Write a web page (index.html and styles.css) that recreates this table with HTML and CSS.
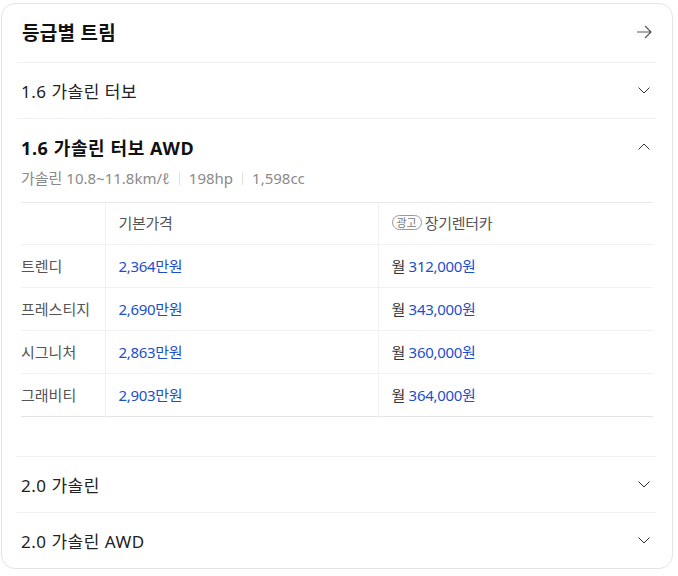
FILE: index.html
```html
<!DOCTYPE html>
<html lang="ko">
<head>
<meta charset="utf-8">
<link rel="stylesheet" href="styles.css">
</head>
<body>
<section class="card">
  <div class="card-head">
    <h2 class="card-title">등급별 트림</h2>
    <svg class="icon-arrow" width="16" height="14" viewBox="0 0 16 14"><path d="M1 7H15M9 1L15 7L9 13" fill="none" stroke="#555" stroke-width="1.2"/></svg>
  </div>

  <div class="trim">
    <div class="trim-row">
      <span class="trim-name">1.6 가솔린 터보</span>
      <svg class="chev" width="12" height="7" viewBox="0 0 12 7"><path d="M0.5 0.5L6 6L11.5 0.5" fill="none" stroke="#333" stroke-width="1"/></svg>
    </div>
  </div>

  <div class="trim open">
    <div class="trim-row open-row">
      <span class="trim-name bold">1.6 가솔린 터보 AWD</span>
      <svg class="chev up" width="12" height="7" viewBox="0 0 12 7"><path d="M0.5 6.5L6 1L11.5 6.5" fill="none" stroke="#333" stroke-width="1"/></svg>
    </div>
    <div class="spec">가솔린 10.8~11.8km/ℓ<span class="sep"></span>198hp<span class="sep"></span>1,598cc</div>
    <table class="price-table">
      <thead>
        <tr><th class="c1"></th><th class="c2">기본가격</th><th class="c3"><span class="ad">광고</span>장기렌터카</th></tr>
      </thead>
      <tbody>
        <tr><td class="c1">트렌디</td><td class="c2 blue">2,364만원</td><td class="c3">월 <span class="blue">312,000원</span></td></tr>
        <tr><td class="c1">프레스티지</td><td class="c2 blue">2,690만원</td><td class="c3">월 <span class="blue">343,000원</span></td></tr>
        <tr><td class="c1">시그니처</td><td class="c2 blue">2,863만원</td><td class="c3">월 <span class="blue">360,000원</span></td></tr>
        <tr><td class="c1">그래비티</td><td class="c2 blue">2,903만원</td><td class="c3">월 <span class="blue">364,000원</span></td></tr>
      </tbody>
    </table>
  </div>

  <div class="trim">
    <div class="trim-row">
      <span class="trim-name">2.0 가솔린</span>
      <svg class="chev" width="12" height="7" viewBox="0 0 12 7"><path d="M0.5 0.5L6 6L11.5 0.5" fill="none" stroke="#333" stroke-width="1"/></svg>
    </div>
  </div>

  <div class="trim last">
    <div class="trim-row">
      <span class="trim-name">2.0 가솔린 AWD</span>
      <svg class="chev" width="12" height="7" viewBox="0 0 12 7"><path d="M0.5 0.5L6 6L11.5 0.5" fill="none" stroke="#333" stroke-width="1"/></svg>
    </div>
  </div>
</section>
</body>
</html>
```
FILE: styles.css
```css
* { box-sizing: border-box; }
html, body { background: #fff; }
body {
  margin: 3px 5px 0 1px;
  font-family: "Noto Sans", "Noto Sans CJK KR", sans-serif;
  color: #222;
}
.card {
  border: 1px solid #e4e4e4;
  border-radius: 14px;
  padding: 0 16px 0 15px;
  height: 566px;
  overflow: hidden;
}
.card-head {
  height: 59px;
  display: flex;
  align-items: center;
  justify-content: space-between;
  padding: 0 4px 3px 5px;
  border-bottom: 1px solid #f0f0f0;
}
.card-title {
  margin: 0;
  font-size: 19px;
  font-weight: 700;
  color: #111;
  letter-spacing: 0.3px;
}
.icon-arrow { display: block; }
.trim { border-bottom: 1px solid #f0f0f0; }
.trim.last { border-bottom: none; }
.trim-row {
  height: 55px;
  display: flex;
  align-items: center;
  justify-content: space-between;
  padding: 0 6px 0 4px;
}
.trim-name {
  font-size: 17px;
  color: #222;
  letter-spacing: 0.5px;
}
.trim-name.bold {
  font-weight: 700;
  font-size: 18px;
  color: #111;
  letter-spacing: 0.6px;
}
.chev { display: block; }
.chev.up { margin-bottom: 4px; }
.open-row {
  height: auto;
  padding-top: 17px;
  line-height: 24px;
}
.trim.open { padding-bottom: 39px; }
.spec {
  padding: 0 4px;
  margin: 8px 0 14px;
  font-size: 15px;
  line-height: 20px;
  color: #8a8a8a;
  display: flex;
  align-items: center;
}
.sep {
  display: inline-block;
  width: 1px;
  height: 13px;
  background: #e0e0e0;
  margin: 0 9px;
}
.price-table {
  margin: 0 3px 0 4px;
  width: calc(100% - 7px);
  border-collapse: collapse;
  border-top: 1px solid #e8e8e8;
  border-bottom: 1px solid #e4e4e4;
  font-size: 15px;
  letter-spacing: -0.3px;
}
.price-table th, .price-table td {
  height: 43px;
  padding: 0 0 2px 13px;
  text-align: left;
  font-weight: 400;
  border-top: 1px solid #f1f1f1;
  color: #333;
  white-space: nowrap;
}
.price-table th { height: 42px; color: #555; border-top: none; padding-bottom: 3px; }
.price-table .c1 { width: 84px; padding-left: 0; color: #555; letter-spacing: 0; }
.price-table .c2 { width: 273px; border-left: 1px solid #f1f1f1; }
.price-table .c3 { border-left: 1px solid #f1f1f1; }
.blue { color: #1d4fcc; }
.price-table td.blue { color: #1d4fcc; }
.ad {
  display: inline-block;
  font-size: 11px;
  line-height: 13px;
  padding: 0 4px;
  border: 1px solid #999;
  border-radius: 8px;
  color: #777;
  margin-right: 3px;
  vertical-align: 2px;
  letter-spacing: 0;
}
```
